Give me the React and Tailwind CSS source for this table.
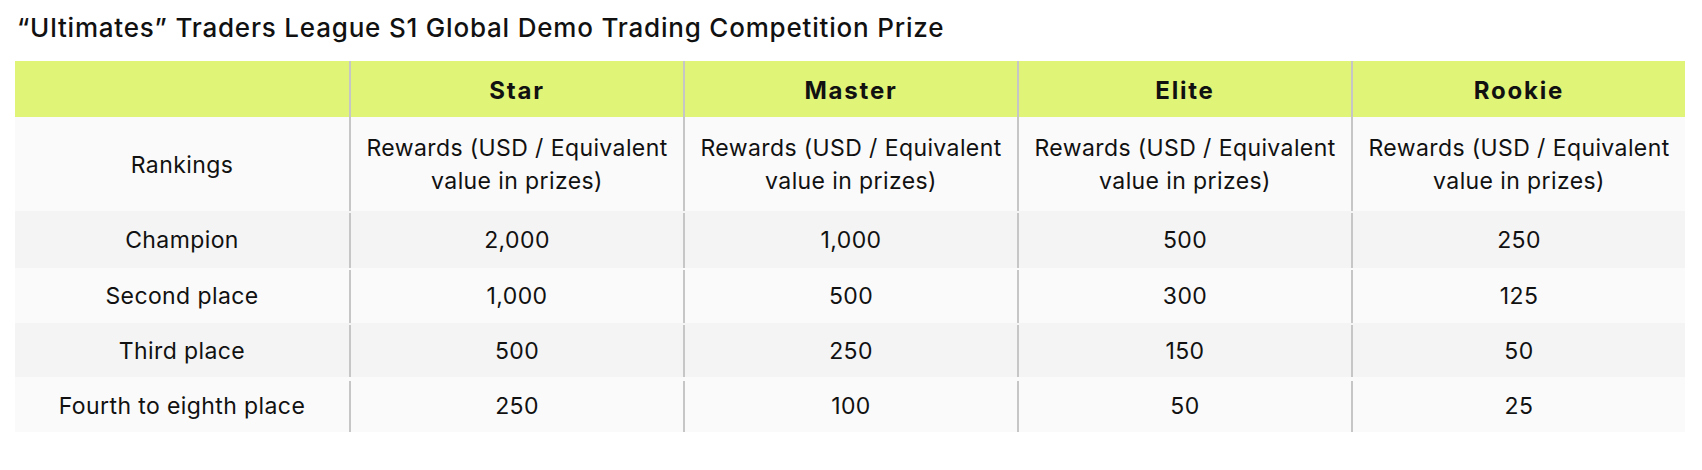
import React from "react";

const cols = ["Star", "Master", "Elite", "Rookie"];
const rows = [
  { label: "Champion", vals: ["2,000", "1,000", "500", "250"], h: "h-[57px] pt-[2px]", bg: "bg-[#f4f4f4]" },
  { label: "Second place", vals: ["1,000", "500", "300", "125"], h: "h-[55px] pt-[2px]", bg: "bg-[#fafafa]" },
  { label: "Third place", vals: ["500", "250", "150", "50"], h: "h-[54px] pt-[2px]", bg: "bg-[#f4f4f4]" },
  { label: "Fourth to eighth place", vals: ["250", "100", "50", "25"], h: "h-[55px] pt-[4px]", bg: "bg-[#fafafa]" },
];

function Cell({ children, first, className = "" }) {
  return (
    <div
      className={
        "flex items-center justify-center text-center " +
        (first ? "" : "border-l-2 border-[#c6c6c6] ") +
        className
      }
    >
      {children}
    </div>
  );
}

export default function App() {
  return (
    <div
      className="w-[1702px] h-[470px] bg-white text-[#111] px-[15px] pt-[12px]"
      style={{ fontFamily: "Inter, 'Noto Sans', sans-serif" }}
    >
      <h1 className="text-[26px] leading-[32px] font-medium tracking-[0.8px] h-[49px] pl-[2px]">
        “Ultimates” Traders League S1 Global Demo Trading Competition Prize
      </h1>
      <div className="w-[1670px] text-[23px] leading-[33px] tracking-[0.4px]">
        <div className="grid grid-cols-5 h-[56px] bg-[#e0f477]">
          <Cell first />
          {cols.map((c) => (
            <Cell key={c} className="font-bold text-[24px] tracking-[1.8px] pt-[2px]">
              {c}
            </Cell>
          ))}
        </div>
        <div className="grid grid-cols-5 h-[94px] bg-[#fafafa]">
          <Cell first className="pt-[2px]">Rankings</Cell>
          {cols.map((c) => (
            <Cell key={c} className="pt-[2px]">
              <span>
                Rewards (USD / Equivalent
                <br />
                value in prizes)
              </span>
            </Cell>
          ))}
        </div>
        {rows.map((r) => (
          <div key={r.label} className={"grid grid-cols-5 " + r.h + " " + r.bg}>
            <Cell first>{r.label}</Cell>
            {r.vals.map((v, i) => (
              <Cell key={i}>{v}</Cell>
            ))}
          </div>
        ))}
      </div>
    </div>
  );
}
